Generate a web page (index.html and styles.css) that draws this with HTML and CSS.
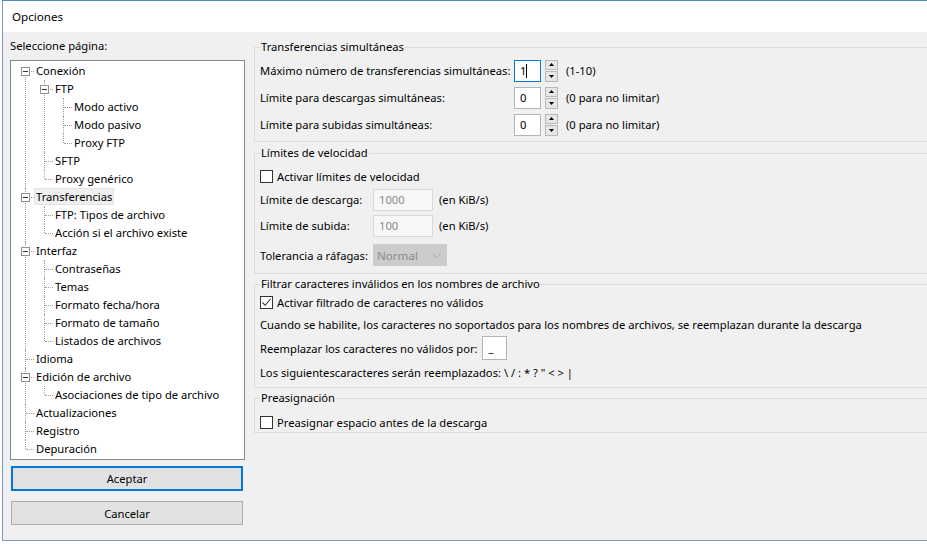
FILE: index.html
```html
<!DOCTYPE html>
<html lang="es">
<head>
    <meta charset="UTF-8">
    <title>Opciones</title>
    <link rel="stylesheet" href="styles.css">
</head>
<body>
<div class="window">
    <div class="titlebar">Opciones</div>
    <div class="dialog">
        <!-- Page selector -->
        <div class="sidebar">
            <div class="side-label">Seleccione página:</div>
            <div class="tree">
                <ul class="tree-list">
                    <li><div class="node"><span class="exp"></span>Conexión</div>
                        <ul>
                            <li><div class="node"><span class="exp"></span>FTP</div>
                                <ul>
                                    <li><div class="node">Modo activo</div></li>
                                    <li><div class="node">Modo pasivo</div></li>
                                    <li><div class="node">Proxy FTP</div></li>
                                </ul>
                            </li>
                            <li><div class="node">SFTP</div></li>
                            <li><div class="node">Proxy genérico</div></li>
                        </ul>
                    </li>
                    <li><div class="node"><span class="exp"></span><span class="sel">Transferencias</span></div>
                        <ul>
                            <li><div class="node">FTP: Tipos de archivo</div></li>
                            <li><div class="node">Acción si el archivo existe</div></li>
                        </ul>
                    </li>
                    <li><div class="node"><span class="exp"></span>Interfaz</div>
                        <ul>
                            <li><div class="node">Contraseñas</div></li>
                            <li><div class="node">Temas</div></li>
                            <li><div class="node">Formato fecha/hora</div></li>
                            <li><div class="node">Formato de tamaño</div></li>
                            <li><div class="node">Listados de archivos</div></li>
                        </ul>
                    </li>
                    <li><div class="node">Idioma</div></li>
                    <li><div class="node"><span class="exp"></span>Edición de archivo</div>
                        <ul>
                            <li><div class="node">Asociaciones de tipo de archivo</div></li>
                        </ul>
                    </li>
                    <li><div class="node">Actualizaciones</div></li>
                    <li><div class="node">Registro</div></li>
                    <li><div class="node">Depuración</div></li>
                </ul>
            </div>
            <button class="btn btn-default">Aceptar</button>
            <button class="btn btn-cancel">Cancelar</button>
        </div>

        <!-- Settings page -->
        <div class="panel">
            <fieldset class="group g1">
                <legend>Transferencias simultáneas</legend>
                <div class="row h27">
                    <span class="lbl w-spin">Máximo número de transferencias simultáneas:</span>
                    <span class="num focus">1<i class="caret"></i></span>
                    <span class="spin">
                        <i class="spin-btn"><svg width="5" height="3" viewBox="0 0 5 3"><path d="M0 3 L2.5 0 L5 3 Z" fill="#000"/></svg></i>
                        <i class="spin-btn"><svg width="5" height="3" viewBox="0 0 5 3"><path d="M0 0 L2.5 3 L5 0 Z" fill="#000"/></svg></i>
                    </span>
                    <span class="hint">(1-10)</span>
                </div>
                <div class="row h27">
                    <span class="lbl w-spin">Límite para descargas simultáneas:</span>
                    <span class="num">0</span>
                    <span class="spin">
                        <i class="spin-btn"><svg width="5" height="3" viewBox="0 0 5 3"><path d="M0 3 L2.5 0 L5 3 Z" fill="#000"/></svg></i>
                        <i class="spin-btn"><svg width="5" height="3" viewBox="0 0 5 3"><path d="M0 0 L2.5 3 L5 0 Z" fill="#000"/></svg></i>
                    </span>
                    <span class="hint">(0 para no limitar)</span>
                </div>
                <div class="row h27">
                    <span class="lbl w-spin">Límite para subidas simultáneas:</span>
                    <span class="num">0</span>
                    <span class="spin">
                        <i class="spin-btn"><svg width="5" height="3" viewBox="0 0 5 3"><path d="M0 3 L2.5 0 L5 3 Z" fill="#000"/></svg></i>
                        <i class="spin-btn"><svg width="5" height="3" viewBox="0 0 5 3"><path d="M0 0 L2.5 3 L5 0 Z" fill="#000"/></svg></i>
                    </span>
                    <span class="hint">(0 para no limitar)</span>
                </div>
            </fieldset>

            <fieldset class="group g2">
                <legend>Límites de velocidad</legend>
                <div class="row h24">
                    <span class="check"></span>
                    <span>Activar límites de velocidad</span>
                </div>
                <div class="row h23">
                    <span class="lbl w-speed">Límite de descarga:</span>
                    <span class="field disabled">1000</span>
                    <span class="unit">(en KiB/s)</span>
                </div>
                <div class="row h29">
                    <span class="lbl w-speed">Límite de subida:</span>
                    <span class="field disabled">100</span>
                    <span class="unit">(en KiB/s)</span>
                </div>
                <div class="row h30">
                    <span class="lbl w-speed">Tolerancia a ráfagas:</span>
                    <span class="select">Normal
                        <svg width="9" height="5" viewBox="0 0 9 5"><path d="M0.5 0.5 L4.5 4.5 L8.5 0.5" fill="none" stroke="#a4a4a4"/></svg>
                    </span>
                </div>
            </fieldset>

            <fieldset class="group g3">
                <legend>Filtrar caracteres inválidos en los nombres de archivo</legend>
                <div class="row h20">
                    <span class="check checked"><svg width="11" height="11" viewBox="0 0 11 11"><path d="M1.5 5.5 L4.2 8.3 L9.5 2" fill="none" stroke="#333" stroke-width="1.1"/></svg></span>
                    <span>Activar filtrado de caracteres no válidos</span>
                </div>
                <div class="row h24">Cuando se habilite, los caracteres no soportados para los nombres de archivos, se reemplazan durante la descarga</div>
                <div class="row h24">
                    <span>Reemplazar los caracteres no válidos por:</span>
                    <span class="char-box">_</span>
                </div>
                <div class="row h24">Los siguientescaracteres serán reemplazados: \ / : * ? " &lt; &gt; |</div>
            </fieldset>

            <fieldset class="group g4">
                <legend>Preasignación</legend>
                <div class="row h20">
                    <span class="check"></span>
                    <span>Preasignar espacio antes de la descarga</span>
                </div>
            </fieldset>
        </div>
    </div>
</div>
</body>
</html>
```

FILE: styles.css
```css
* {
    box-sizing: border-box;
}
body {
    margin: 0;
    background-color: #ffffff;
    font-family: "Noto Sans", "Open Sans", sans-serif;
    font-size: 11.2px;
    color: #000000;
    overflow: hidden;
}

.window {
    margin-left: 2px;
    height: 541px;
    border-top: 1px solid #4f86c6;
    border-left: 1px solid #7f9cc0;
    border-bottom: 1px solid #7f9cc0;
    background-color: #f0f0f0;
}

.titlebar {
    height: 31px;
    padding-left: 9px;
    line-height: 31px;
    font-size: 11.6px;
    background-color: #ffffff;
}

.dialog {
    display: flex;
    height: 508px;
}

/* Left column */
.sidebar {
    width: 251px;
    flex-shrink: 0;
    padding: 6px 0 0 7px;
}
.side-label {
    height: 16px;
    line-height: 16px;
    margin-bottom: 6px;
}
.tree {
    width: 235px;
    height: 400px;
    padding-top: 1px;
    border: 1px solid #828790;
    background-color: #ffffff;
    overflow: hidden;
}
.tree-list,
.tree-list ul {
    list-style: none;
    margin: 0;
    padding: 0;
}
.tree-list {
    margin-left: 14px;
}
.tree-list ul {
    margin-left: 19px;
}
.tree-list li {
    position: relative;
}
/* vertical connector */
.tree-list li::before {
    content: '';
    position: absolute;
    left: 0;
    top: 0;
    bottom: 0;
    border-left: 1px dotted #a0a0a0;
}
.tree-list li:last-child::before {
    bottom: auto;
    height: 9px;
}
.tree-list > li:first-child::before {
    top: 9px;
}
.node {
    position: relative;
    height: 18px;
    line-height: 18px;
    padding-left: 11px;
    white-space: nowrap;
}
/* horizontal connector */
.node::before {
    content: '';
    position: absolute;
    left: 1px;
    top: 9px;
    width: 8px;
    border-top: 1px dotted #a0a0a0;
}
.exp {
    position: absolute;
    left: -4px;
    top: 5px;
    width: 9px;
    height: 9px;
    border: 1px solid #919191;
    background-color: #ffffff;
    z-index: 1;
}
.exp::after {
    content: '';
    position: absolute;
    left: 1px;
    top: 3px;
    width: 5px;
    height: 1px;
    background-color: #333333;
}
.sel {
    background-color: #eeeeee;
    outline: 1px solid #e4e4e4;
    padding: 0 1px;
    margin-left: -1px;
}

.btn {
    display: block;
    width: 232px;
    margin-left: 1px;
    font-family: inherit;
    font-size: 11.2px;
    color: #000000;
    background-color: #e1e1e1;
    padding: 0;
}
.btn-default {
    height: 25px;
    margin-top: 6px;
    border: 2px solid #0078d7;
}
.btn-cancel {
    height: 24px;
    margin-top: 10px;
    border: 1px solid #adadad;
}

/* Right column */
.panel {
    flex: 1;
    padding-top: 7px;
}
.group {
    margin: 0;
    padding: 0 0 3px 5px;
    border: 1px solid #dcdcdc;
    border-right: none;
}
.group legend {
    height: 16px;
    line-height: 16px;
    padding: 0 1px;
}
.g1 {
    padding-top: 2px;
}
.g2 {
    margin-top: 3px;
    padding-top: 3px;
}
.g3,
.g4 {
    margin-top: 2px;
}
.g4 {
    padding-top: 6px;
    padding-bottom: 0;
}

.row {
    display: flex;
    align-items: center;
    white-space: nowrap;
}
.h20 { height: 20px; }
.h23 { height: 23px; }
.h24 { height: 24px; }
.h27 { height: 27px; }
.h29 { height: 29px; }
.h30 { height: 30px; }

.lbl {
    flex-shrink: 0;
}
.w-spin {
    width: 254px;
}
.w-speed {
    width: 113px;
}

.num {
    position: relative;
    width: 27px;
    height: 22px;
    line-height: 20px;
    padding-left: 5px;
    border: 1px solid #b4b4b4;
    background-color: #ffffff;
}
.num.focus {
    border-color: #0078d7;
}
.caret {
    position: absolute;
    left: 11px;
    top: 3px;
    width: 1px;
    height: 14px;
    background-color: #000000;
}
.spin {
    display: flex;
    flex-direction: column;
    width: 13px;
    height: 22px;
    margin-left: 4px;
    gap: 1px;
}
.spin-btn {
    display: flex;
    align-items: center;
    justify-content: center;
    flex: 1;
    border: 1px solid #b9b9b9;
    background-color: #e6e6e6;
}
.spin-btn svg {
    display: block;
}
.hint {
    margin-left: 8px;
}

.check {
    display: inline-flex;
    align-items: center;
    justify-content: center;
    width: 13px;
    height: 13px;
    margin-right: 4px;
    border: 1px solid #333333;
    background-color: #ffffff;
}

.field {
    width: 60px;
    height: 22px;
    line-height: 20px;
    padding-left: 5px;
    border: 1px solid #d9d9d9;
}
.field.disabled {
    color: #8a8a8a;
    background-color: #f7f7f7;
}
.unit {
    margin-left: 6px;
}
.select {
    display: flex;
    align-items: center;
    justify-content: space-between;
    width: 74px;
    height: 22px;
    padding: 0 6px 0 4px;
    color: #8a8a8a;
    font-size: 11.6px;
    background-color: #cccccc;
}

.char-box {
    width: 25px;
    height: 24px;
    line-height: 22px;
    margin-left: 4px;
    padding-left: 6px;
    border: 1px solid #b4b4b4;
    background-color: #ffffff;
}
```
